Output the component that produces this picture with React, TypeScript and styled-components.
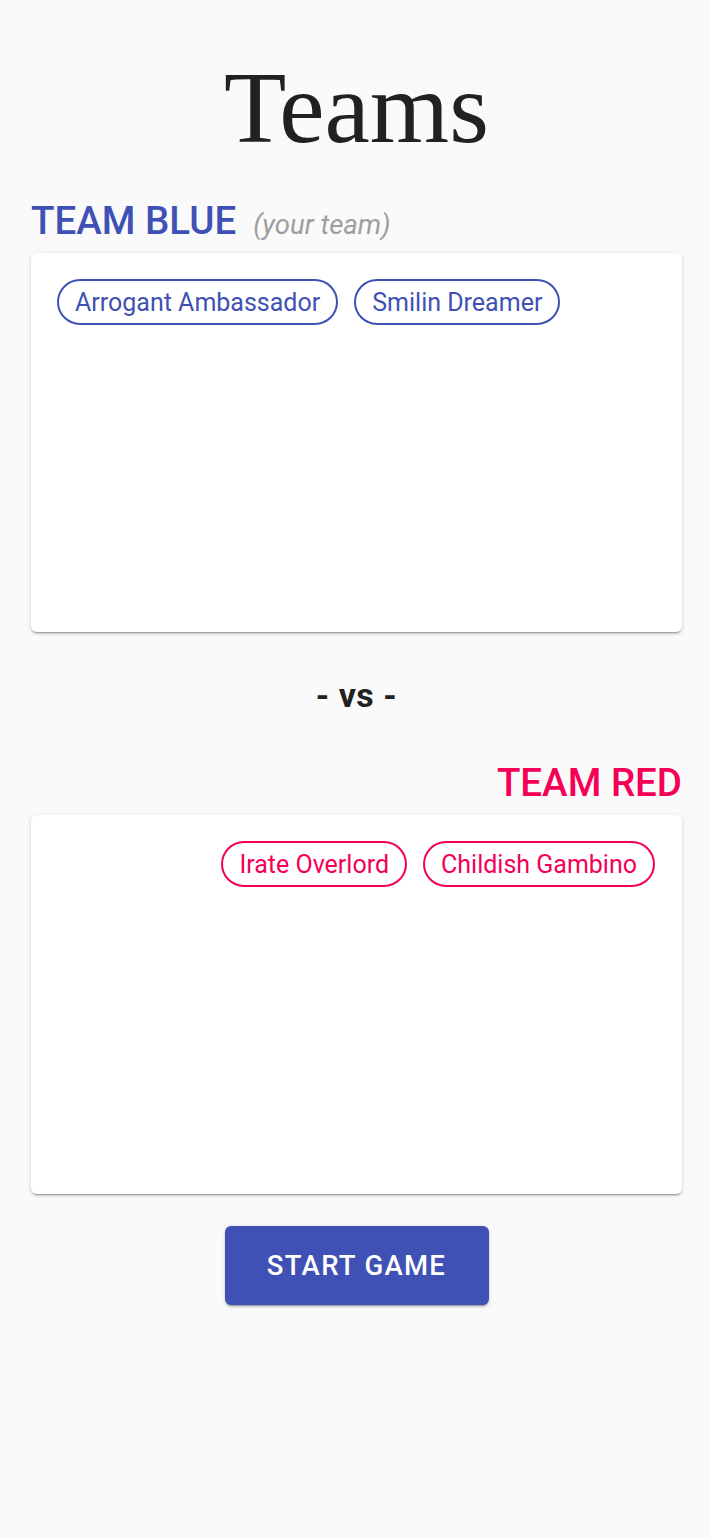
import { createGlobalStyle } from 'styled-components'
import styled from 'styled-components'

const BLUE = '#3f51b5'
const RED = '#f50057'

const GlobalStyle = createGlobalStyle`
	html, body {
		margin: 0;
		padding: 0;
		background: #fafafa;
		font-family: Roboto, 'Noto Sans', sans-serif;
		color: #212121;
	}
`

type TeamColor = 'blue' | 'red'

const colorOf = (c: TeamColor) => (c === 'blue' ? BLUE : RED)

const blueTeam = ['Arrogant Ambassador', 'Smilin Dreamer']
const redTeam = ['Irate Overlord', 'Childish Gambino']

const App = () => (
	<>
		<GlobalStyle />
		<Page>
			<Title>Teams</Title>
			<TeamHeader $align="left">
				<TeamName $color="blue">TEAM BLUE</TeamName>
				<YourTeam>(your team)</YourTeam>
			</TeamHeader>
			<TeamCard $align="left">
				{blueTeam.map((name) => (
					<Chip key={name} $color="blue">
						{name}
					</Chip>
				))}
			</TeamCard>
			<Versus>- vs -</Versus>
			<TeamHeader $align="right">
				<TeamName $color="red">TEAM RED</TeamName>
			</TeamHeader>
			<TeamCard $align="right">
				{redTeam.map((name) => (
					<Chip key={name} $color="red">
						{name}
					</Chip>
				))}
			</TeamCard>
			<StartButton>START GAME</StartButton>
		</Page>
	</>
)

const Page = styled.div`
	display: flex;
	flex-direction: column;
	padding: 0 28px 0 31px;
	min-height: 1538px;
	box-sizing: border-box;
`

const Title = styled.h1`
	margin: 52px 0 0;
	text-align: center;
	font-family: 'Liberation Serif', 'DejaVu Serif', serif;
	font-weight: 400;
	font-size: 102px;
	line-height: 112px;
	color: #212121;
`

const TeamHeader = styled.div<{ $align: 'left' | 'right' }>`
	display: flex;
	align-items: baseline;
	justify-content: ${(p) => (p.$align === 'left' ? 'flex-start' : 'flex-end')};
	gap: 17px;
	margin-top: ${(p) => (p.$align === 'left' ? '34px' : '45px')};
	height: 46px;
`

const TeamName = styled.span<{ $color: TeamColor }>`
	font-size: 38.5px;
	font-weight: 500;
	line-height: 46px;
	color: ${(p) => colorOf(p.$color)};
`

const YourTeam = styled.span`
	font-size: 27.5px;
	font-style: italic;
	font-weight: 400;
	color: #9e9e9e;
`

const TeamCard = styled.div<{ $align: 'left' | 'right' }>`
	display: flex;
	flex-wrap: wrap;
	align-content: flex-start;
	justify-content: ${(p) => (p.$align === 'left' ? 'flex-start' : 'flex-end')};
	gap: 16px;
	margin-top: 9px;
	height: 379px;
	box-sizing: border-box;
	padding: 26px 27px 26px 26px;
	background: #fff;
	border-radius: 6px;
	box-shadow: 0px 3px 1px -2px rgba(0, 0, 0, 0.2), 0px 2px 2px 0px rgba(0, 0, 0, 0.14),
		0px 1px 5px 0px rgba(0, 0, 0, 0.12);
`

const Chip = styled.div<{ $color: TeamColor }>`
	display: inline-flex;
	align-items: center;
	height: 46px;
	box-sizing: border-box;
	padding: 0 16px;
	border: 2px solid ${(p) => colorOf(p.$color)};
	border-radius: 23px;
	font-size: 25px;
	color: ${(p) => colorOf(p.$color)};
	white-space: nowrap;
`

const Versus = styled.div`
	margin-top: 43px;
	text-align: center;
	font-size: 34px;
	font-weight: 700;
	line-height: 40px;
	letter-spacing: 0.5px;
`

const StartButton = styled.button`
	align-self: center;
	margin-top: 32px;
	width: 264px;
	height: 79px;
	border: none;
	border-radius: 6px;
	background: ${BLUE};
	color: #fff;
	font-family: Roboto, sans-serif;
	font-size: 27.5px;
	font-weight: 500;
	letter-spacing: 1.3px;
	box-shadow: 0px 3px 1px -2px rgba(0, 0, 0, 0.2), 0px 2px 2px 0px rgba(0, 0, 0, 0.14),
		0px 1px 5px 0px rgba(0, 0, 0, 0.12);
	cursor: pointer;
`

export default App
